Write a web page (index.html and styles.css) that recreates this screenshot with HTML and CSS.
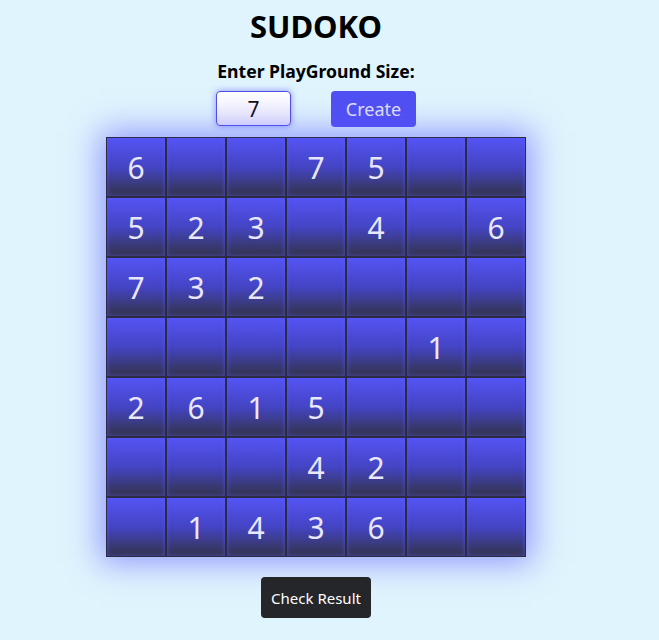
FILE: index.html
```html
<!DOCTYPE html>
<html>
<head>
<meta charset="utf-8">
<link rel="stylesheet" href="styles.css">
</head>
<body>
<div class="app">
  <h1 class="title">SUDOKO</h1>
  <div class="label">Enter PlayGround Size:</div>
  <div class="controls">
    <input class="size-input" type="text" value="7">
    <button class="create-btn">Create</button>
  </div>
  <div class="board">
    <div class="cell">6</div><div class="cell"></div><div class="cell"></div><div class="cell">7</div><div class="cell">5</div><div class="cell"></div><div class="cell"></div>
    <div class="cell">5</div><div class="cell">2</div><div class="cell">3</div><div class="cell"></div><div class="cell">4</div><div class="cell"></div><div class="cell">6</div>
    <div class="cell">7</div><div class="cell">3</div><div class="cell">2</div><div class="cell"></div><div class="cell"></div><div class="cell"></div><div class="cell"></div>
    <div class="cell"></div><div class="cell"></div><div class="cell"></div><div class="cell"></div><div class="cell"></div><div class="cell">1</div><div class="cell"></div>
    <div class="cell">2</div><div class="cell">6</div><div class="cell">1</div><div class="cell">5</div><div class="cell"></div><div class="cell"></div><div class="cell"></div>
    <div class="cell"></div><div class="cell"></div><div class="cell"></div><div class="cell">4</div><div class="cell">2</div><div class="cell"></div><div class="cell"></div>
    <div class="cell"></div><div class="cell">1</div><div class="cell">4</div><div class="cell">3</div><div class="cell">6</div><div class="cell"></div><div class="cell"></div>
  </div>
  <button class="check-btn">Check Result</button>
</div>
</body>
</html>
```
FILE: styles.css
```css
html, body {
  margin: 0;
  padding: 0;
  background: #e0f4fd;
  font-family: "Noto Sans", "Open Sans", sans-serif;
}
.app {
  width: 632px;
  display: flex;
  flex-direction: column;
  align-items: center;
}
.title {
  margin: 8px 0 0;
  font-size: 31px;
  font-weight: 700;
  line-height: 36px;
  color: #000;
}
.label {
  margin-top: 16px;
  font-size: 17.6px;
  font-weight: 700;
  line-height: 22px;
  color: #000;
}
.controls {
  margin-top: 9px;
  display: flex;
  gap: 40px;
  align-items: flex-start;
}
.size-input {
  box-sizing: border-box;
  width: 75px;
  height: 35px;
  border: 1px solid #4f4fe6;
  border-radius: 4px;
  background: linear-gradient(#ffffff, #ebe9fb);
  box-shadow: 0 0 6px rgba(80, 80, 240, 0.6);
  text-align: center;
  font-family: inherit;
  font-size: 21px;
  color: #111;
  padding: 0;
  outline: none;
}
.create-btn {
  box-sizing: border-box;
  width: 85px;
  height: 36px;
  border: none;
  border-radius: 4px;
  background: #5050f2;
  color: #e4e4fa;
  font-family: inherit;
  font-size: 18px;
  padding: 0 0 1px;
}
.board {
  margin-top: 10px;
  display: grid;
  grid-template-columns: repeat(7, 60px);
  grid-template-rows: repeat(7, 60px);
  box-shadow: 0 0 30px 6px rgba(80, 80, 255, 0.55);
}
.cell {
  box-sizing: border-box;
  border: 1px solid #2b2b44;
  background: linear-gradient(#5454f4, #4444c4 50%, #33334a);
  box-shadow: inset 0 0 5px rgba(90, 90, 255, 0.6);
  color: #e8e8fa;
  font-size: 30px;
  display: flex;
  align-items: center;
  justify-content: center;
}
.check-btn {
  margin-top: 20px;
  box-sizing: border-box;
  width: 110px;
  height: 41px;
  border: none;
  border-radius: 4px;
  background: #25262a;
  color: #fff;
  font-family: inherit;
  font-size: 15px;
  padding: 0;
}
```
